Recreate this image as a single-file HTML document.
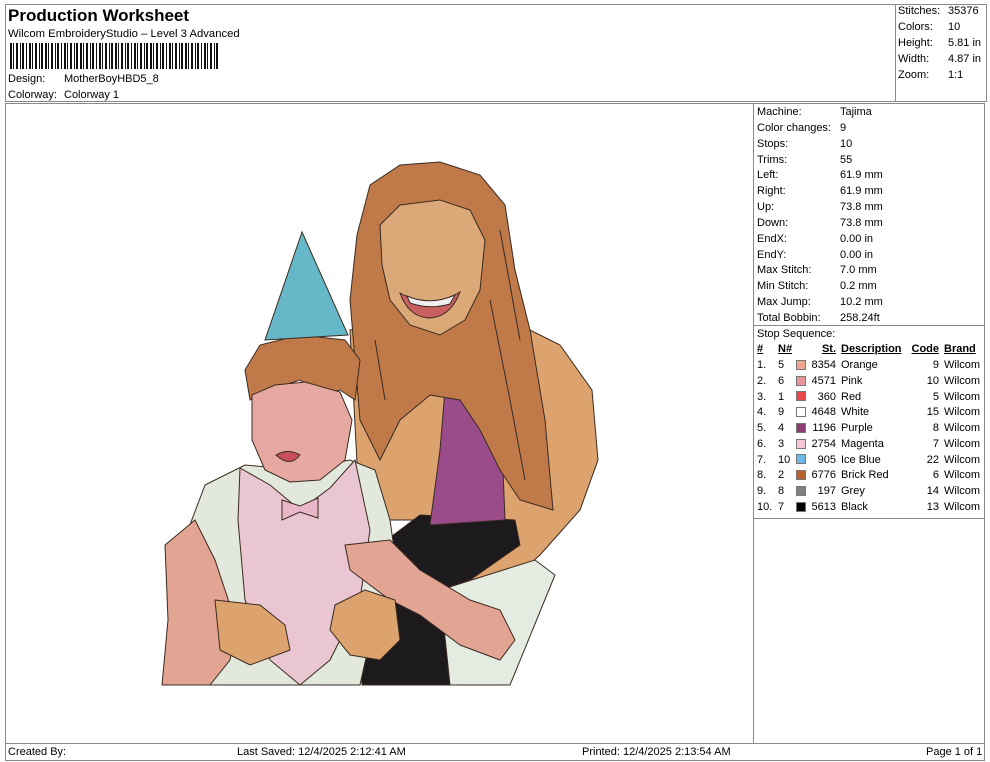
<!DOCTYPE html>
<html><head><meta charset="utf-8"><style>
*{margin:0;padding:0;box-sizing:border-box}
body{width:990px;height:762px;background:#fff;font-family:"Liberation Sans",Arial,sans-serif;font-size:11px;color:#000;position:relative;overflow:hidden}
.a{position:absolute;white-space:nowrap;line-height:13px}
.b{position:absolute;border:1px solid #8a8a8a}
.sw{position:absolute;width:10px;height:10px;border:1px solid #777}
.r{text-align:right}
u{text-decoration:underline}
</style></head><body>
<div class="b" style="left:5px;top:4px;width:982px;height:98px"></div>
<div class="b" style="left:895px;top:4px;width:92px;height:98px"></div>
<div class="b" style="left:5px;top:103px;width:980px;height:641px"></div>
<div class="b" style="left:753px;top:103px;width:232px;height:641px"></div>
<div class="b" style="left:753px;top:325px;width:232px;height:193px;border-left:none;border-right:none;border-bottom:none"></div>
<div class="b" style="left:753px;top:518px;width:232px;height:1px;border:none;border-top:1px solid #8a8a8a"></div>
<div class="b" style="left:5px;top:743px;width:980px;height:18px"></div>

<div class="a" style="left:8px;top:6px;font-size:17px;font-weight:bold;line-height:20px">Production Worksheet</div>
<div class="a" style="left:8px;top:28px;font-size:11.3px">Wilcom EmbroideryStudio – Level 3 Advanced</div>
<svg style="position:absolute;left:10px;top:43px" width="210" height="26">
<g fill="#111">
<rect x="0" y="0" width="2" height="26"/><rect x="3" width="1" height="26"/><rect x="6" width="2" height="26"/><rect x="10" width="1" height="26"/><rect x="12" width="2" height="26"/><rect x="16" width="1" height="26"/><rect x="19" width="2" height="26"/><rect x="22" width="1" height="26"/><rect x="25" width="2" height="26"/><rect x="29" width="1" height="26"/><rect x="31" width="2" height="26"/><rect x="35" width="2" height="26"/><rect x="38" width="1" height="26"/><rect x="41" width="2" height="26"/><rect x="45" width="1" height="26"/><rect x="47" width="2" height="26"/><rect x="51" width="1" height="26"/><rect x="54" width="2" height="26"/><rect x="57" width="1" height="26"/><rect x="60" width="2" height="26"/><rect x="64" width="1" height="26"/><rect x="66" width="2" height="26"/><rect x="70" width="2" height="26"/><rect x="73" width="1" height="26"/><rect x="76" width="2" height="26"/><rect x="80" width="1" height="26"/><rect x="82" width="2" height="26"/><rect x="86" width="1" height="26"/><rect x="89" width="2" height="26"/><rect x="92" width="1" height="26"/><rect x="95" width="2" height="26"/><rect x="99" width="1" height="26"/><rect x="101" width="2" height="26"/><rect x="105" width="2" height="26"/><rect x="108" width="1" height="26"/><rect x="111" width="2" height="26"/><rect x="115" width="1" height="26"/><rect x="117" width="2" height="26"/><rect x="121" width="1" height="26"/><rect x="124" width="2" height="26"/><rect x="127" width="1" height="26"/><rect x="130" width="2" height="26"/><rect x="134" width="1" height="26"/><rect x="136" width="2" height="26"/><rect x="140" width="2" height="26"/><rect x="143" width="1" height="26"/><rect x="146" width="2" height="26"/><rect x="150" width="1" height="26"/><rect x="152" width="2" height="26"/><rect x="156" width="1" height="26"/><rect x="159" width="2" height="26"/><rect x="162" width="1" height="26"/><rect x="165" width="2" height="26"/><rect x="169" width="1" height="26"/><rect x="171" width="2" height="26"/><rect x="175" width="2" height="26"/><rect x="178" width="1" height="26"/><rect x="181" width="2" height="26"/><rect x="185" width="1" height="26"/><rect x="187" width="2" height="26"/><rect x="191" width="1" height="26"/><rect x="194" width="2" height="26"/><rect x="197" width="1" height="26"/><rect x="200" width="2" height="26"/><rect x="204" width="1" height="26"/><rect x="206" width="2" height="26"/>
</g></svg>
<div class="a" style="left:8px;top:73px">Design:</div><div class="a" style="left:64px;top:73px">MotherBoyHBD5_8</div>
<div class="a" style="left:8px;top:89px">Colorway:</div><div class="a" style="left:64px;top:89px">Colorway 1</div>

<div class="a" style="left:898px;top:5px">Stitches:</div><div class="a" style="left:948px;top:5px">35376</div>
<div class="a" style="left:898px;top:21px">Colors:</div><div class="a" style="left:948px;top:21px">10</div>
<div class="a" style="left:898px;top:37px">Height:</div><div class="a" style="left:948px;top:37px">5.81 in</div>
<div class="a" style="left:898px;top:53px">Width:</div><div class="a" style="left:948px;top:53px">4.87 in</div>
<div class="a" style="left:898px;top:69px">Zoom:</div><div class="a" style="left:948px;top:69px">1:1</div>

<div class="a" style="left:757px;top:105px;line-height:15.85px">Machine:<br>Color changes:<br>Stops:<br>Trims:<br>Left:<br>Right:<br>Up:<br>Down:<br>EndX:<br>EndY:<br>Max Stitch:<br>Min Stitch:<br>Max Jump:<br>Total Bobbin:<br>Stop Sequence:</div>
<div class="a" style="left:840px;top:105px;line-height:15.85px">Tajima<br>9<br>10<br>55<br>61.9 mm<br>61.9 mm<br>73.8 mm<br>73.8 mm<br>0.00 in<br>0.00 in<br>7.0 mm<br>0.2 mm<br>10.2 mm<br>258.24ft</div>

<div class="a" style="left:757px;top:343px;font-weight:bold"><u>#</u></div>
<div class="a" style="left:778px;top:343px;font-weight:bold"><u>N#</u></div>
<div class="a r" style="left:800px;width:36px;top:343px;font-weight:bold"><u>St.</u></div>
<div class="a" style="left:841px;top:343px;font-weight:bold"><u>Description</u></div>
<div class="a r" style="left:905px;width:34px;top:343px;font-weight:bold"><u>Code</u></div>
<div class="a" style="left:944px;top:343px;font-weight:bold"><u>Brand</u></div>

<div class="a" style="left:757px;top:358px;line-height:15.75px">1.<br>2.<br>3.<br>4.<br>5.<br>6.<br>7.<br>8.<br>9.<br>10.</div>
<div class="a" style="left:778px;top:358px;line-height:15.75px">5<br>6<br>1<br>9<br>4<br>3<br>10<br>2<br>8<br>7</div>
<div class="a r" style="left:800px;width:36px;top:358px;line-height:15.75px">8354<br>4571<br>360<br>4648<br>1196<br>2754<br>905<br>6776<br>197<br>5613</div>
<div class="a" style="left:841px;top:358px;line-height:15.75px">Orange<br>Pink<br>Red<br>White<br>Purple<br>Magenta<br>Ice Blue<br>Brick Red<br>Grey<br>Black</div>
<div class="a r" style="left:905px;width:34px;top:358px;line-height:15.75px">9<br>10<br>5<br>15<br>8<br>7<br>22<br>6<br>14<br>13</div>
<div class="a" style="left:944px;top:358px;line-height:15.75px">Wilcom<br>Wilcom<br>Wilcom<br>Wilcom<br>Wilcom<br>Wilcom<br>Wilcom<br>Wilcom<br>Wilcom<br>Wilcom</div>
<div class="sw" style="left:796px;top:360px;background:#f0a78c"></div>
<div class="sw" style="left:796px;top:376px;background:#e8949a"></div>
<div class="sw" style="left:796px;top:391px;background:#e8474a"></div>
<div class="sw" style="left:796px;top:407px;background:#fff"></div>
<div class="sw" style="left:796px;top:423px;background:#8e3c72"></div>
<div class="sw" style="left:796px;top:439px;background:#f4c6d6"></div>
<div class="sw" style="left:796px;top:454px;background:#6cb8e8"></div>
<div class="sw" style="left:796px;top:470px;background:#b86232"></div>
<div class="sw" style="left:796px;top:486px;background:#808080"></div>
<div class="sw" style="left:796px;top:502px;background:#000"></div>

<svg style="position:absolute;left:0;top:0" width="750" height="740" stroke="#3a2a20" stroke-width="1">
<path d="M350,330 L420,315 L510,320 L560,345 L592,390 L598,460 L580,510 L540,555 L500,590 L470,615 L430,630 L400,600 L440,560 L500,520 L360,520 Z" fill="#dca36e"/>
<path d="M440,590 L535,560 L555,575 L510,685 L430,685 Z" fill="#e4ece2"/>
<path d="M420,515 L515,520 L520,545 L470,580 L440,590 L450,685 L362,685 L355,590 L380,545 Z" fill="#1c1a1c"/>
<path d="M445,390 L470,380 L500,395 L505,520 L430,525 L440,450 Z" fill="#9a4c8a"/>
<path d="M357,235 L370,185 L400,165 L440,162 L480,175 L505,205 L515,270 L530,330 L545,420 L553,510 L520,500 L500,470 L480,430 L460,400 L430,395 L400,420 L380,460 L360,420 L355,360 L350,300 Z" fill="#c07a4a"/>
<path d="M380,225 L400,205 L440,200 L470,210 L485,240 L480,290 L465,320 L440,335 L410,325 L390,300 L382,265 Z" fill="#dba878"/>
<path d="M400,293 Q430,310 460,292 Q450,318 428,318 Q408,316 400,293 Z" fill="#c86060"/>
<path d="M407,296 Q430,306 455,295 L450,304 Q430,310 410,303 Z" fill="#eee"/>
<path d="M490,300 L510,400 L525,480 M375,340 L385,400 M500,230 L520,340" fill="none"/>
<path d="M205,485 L245,465 L300,470 L350,460 L375,470 L390,520 L400,590 L370,640 L360,685 L195,685 L180,620 L188,530 Z" fill="#e2e8dc"/>
<path d="M240,468 L270,485 L300,510 L330,488 L355,460 L370,530 L360,600 L330,660 L300,685 L270,660 L245,600 L238,520 Z" fill="#e9c6d2"/>
<path d="M282,500 L300,506 L318,498 L318,518 L300,512 L282,520 Z" fill="#e8b8c8"/>
<path d="M165,545 L195,520 L215,560 L235,620 L230,660 L210,685 L162,685 L168,620 Z" fill="#e2a594"/>
<path d="M215,600 L260,605 L285,625 L290,650 L250,665 L220,650 Z" fill="#dca36e"/>
<path d="M345,545 L390,540 L420,570 L470,600 L500,610 L515,640 L500,660 L460,645 L420,615 L390,600 L350,570 Z" fill="#e2a594"/>
<path d="M335,605 L365,590 L395,600 L400,640 L380,660 L350,655 L330,630 Z" fill="#dca36e"/>
<path d="M245,370 L260,345 L300,335 L345,340 L360,360 L355,400 L340,390 L320,395 L300,380 L270,390 L250,400 Z" fill="#c07a4a"/>
<path d="M252,395 L275,385 L305,382 L340,392 L352,420 L345,460 L320,480 L290,482 L265,470 L252,440 Z" fill="#e6a8a0"/>
<path d="M276,455 Q288,448 300,455 Q290,468 276,455 Z" fill="#c8505a"/>
<path d="M302,232 L265,340 L348,335 Z" fill="#66b8c8"/>
</svg>

<div class="a" style="left:8px;top:746px">Created By:</div>
<div class="a" style="left:237px;top:746px">Last Saved: 12/4/2025 2:12:41 AM</div>
<div class="a" style="left:582px;top:746px">Printed: 12/4/2025 2:13:54 AM</div>
<div class="a" style="left:926px;top:746px">Page 1 of 1</div>
</body></html>
